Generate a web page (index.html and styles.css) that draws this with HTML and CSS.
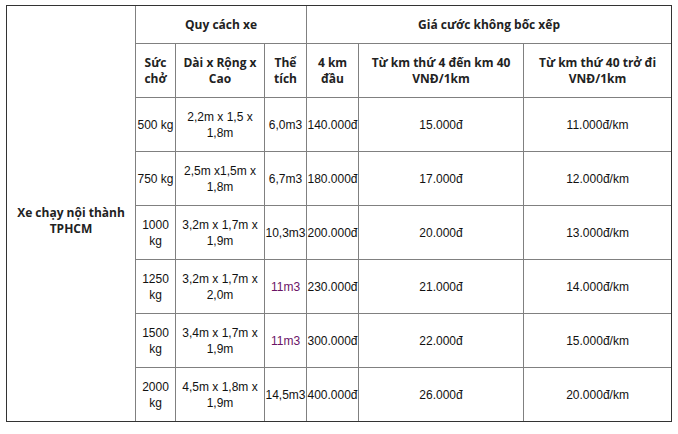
FILE: index.html
```html
<!DOCTYPE html>
<html lang="vi">
<head>
<meta charset="utf-8">
<title>Bảng giá</title>
<link rel="stylesheet" href="styles.css">
</head>
<body>
<table class="price">
  <colgroup>
    <col class="c1"><col class="c2"><col class="c3"><col class="c4"><col class="c5"><col class="c6"><col class="c7">
  </colgroup>
  <tr class="h1">
    <th class="side" rowspan="8"><span class="side-text">Xe chạy nội thành TPHCM</span></th>
    <th colspan="3">Quy cách xe</th>
    <th colspan="3" class="last">Giá cước không bốc xếp</th>
  </tr>
  <tr class="h2">
    <th>Sức chở</th>
    <th>Dài x Rộng x Cao</th>
    <th>Thể tích</th>
    <th>4 km đầu</th>
    <th>Từ km thứ 4 đến km 40 VNĐ/1km</th>
    <th class="last">Từ km thứ 40 trở đi VNĐ/1km</th>
  </tr>
  <tr class="row">
    <td>500 kg</td><td>2,2m x 1,5 x 1,8m</td><td class="nw">6,0m3</td><td class="nw">140.000đ</td><td>15.000đ</td><td class="last">11.000đ/km</td>
  </tr>
  <tr class="row">
    <td>750 kg</td><td>2,5m x1,5m x 1,8m</td><td class="nw">6,7m3</td><td class="nw">180.000đ</td><td>17.000đ</td><td class="last">12.000đ/km</td>
  </tr>
  <tr class="row">
    <td>1000 kg</td><td>3,2m x 1,7m x 1,9m</td><td class="nw">10,3m3</td><td class="nw">200.000đ</td><td>20.000đ</td><td class="last">13.000đ/km</td>
  </tr>
  <tr class="row">
    <td>1250 kg</td><td>3,2m x 1,7m x 2,0m</td><td class="nw purple">11m3</td><td class="nw">230.000đ</td><td>21.000đ</td><td class="last">14.000đ/km</td>
  </tr>
  <tr class="row">
    <td>1500 kg</td><td>3,4m x 1,7m x 1,9m</td><td class="nw purple">11m3</td><td class="nw">300.000đ</td><td>22.000đ</td><td class="last">15.000đ/km</td>
  </tr>
  <tr class="row final">
    <td>2000 kg</td><td>4,5m x 1,8m x 1,9m</td><td class="nw">14,5m3</td><td class="nw">400.000đ</td><td>26.000đ</td><td class="last">20.000đ/km</td>
  </tr>
</table>
</body>
</html>
```
FILE: styles.css
```css
html, body {
  margin: 0;
  padding: 0;
  background: #ffffff;
}
body {
  padding: 5px 0 0 6px;
}
.price {
  table-layout: fixed;
  border-collapse: separate;
  border-spacing: 0;
  border: 1px solid #333333;
  width: 666px;
  font-family: "Liberation Sans", Arial, sans-serif;
  font-size: 12px;
  line-height: 16px;
  color: #111111;
}
.c1 { width: 129px; }
.c2 { width: 40px; }
.c3 { width: 89px; }
.c4 { width: 42px; }
.c5 { width: 52px; }
.c6 { width: 165px; }
.c7 { width: 147px; }
.price th,
.price td {
  border-right: 1px solid #808080;
  border-bottom: 1px solid #808080;
  padding: 0;
  text-align: center;
  vertical-align: middle;
}
.price th {
  font-family: "Open Sans", "Noto Sans", sans-serif;
  font-weight: 700;
  color: #222222;
}
.price .last {
  border-right: none;
}
.price .side {
  border-bottom: none;
  padding: 14px 6px 0;
}
.side-text {
  display: block;
}
.h1 { height: 38px; }
.h2 { height: 54px; }
.row { height: 54px; }
.row.final { height: 53px; }
.row.final td { border-bottom: none; }
.nw { white-space: nowrap; }
.purple { color: #6a1466; }
```
